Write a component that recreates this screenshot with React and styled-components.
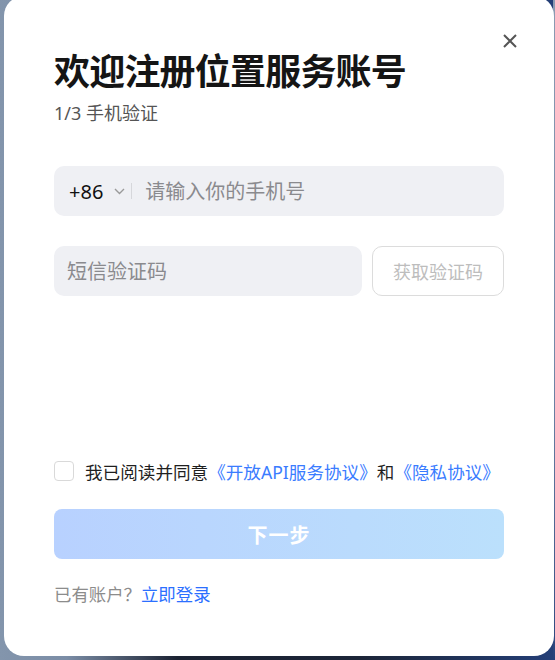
import React, { useState } from 'react';
import styled, { createGlobalStyle } from 'styled-components';

const GlobalStyle = createGlobalStyle`
    html, body {
        margin: 0;
        padding: 0;
    }
    body {
        font-family: "Noto Sans", "Noto Sans CJK SC", sans-serif;
        overflow: hidden;
    }
`;

const Backdrop = styled.div`
    width: 555px;
    height: 660px;
    padding: 0 1px 4px 4px;
    box-sizing: border-box;
    background:
        linear-gradient(to bottom, #8b9bb2 0%, #7388a8 55%, #3d5588 92%, #24407a 100%) right top / 2px 100% no-repeat,
        linear-gradient(to right, #8395ac 0%, #7b8da6 12%, #1b2232 32%, #1c2538 65%, #243f78 100%);
    overflow: hidden;
`;

const Modal = styled.div`
    position: relative;
    width: 550px;
    height: 660px;
    margin-top: -4px;
    box-sizing: border-box;
    padding: 54px 50px 0;
    background: #fff;
    border-radius: 20px;
`;

const CloseButton = styled.button`
    position: absolute;
    top: 35px;
    right: 34px;
    width: 20px;
    height: 20px;
    padding: 0;
    border: 0;
    background: transparent;
    display: flex;
    align-items: center;
    justify-content: center;
    cursor: pointer;
`;

const Title = styled.h1`
    margin: 0;
    font-size: 36px;
    line-height: 43px;
    font-weight: 700;
    color: #151515;
    letter-spacing: -0.8px;
`;

const SubTitle = styled.div`
    margin-top: 8px;
    font-size: 18px;
    line-height: 24px;
    color: #555;
`;

const Field = styled.div`
    display: flex;
    align-items: center;
    height: 50px;
    margin-top: ${props => props.top}px;
    background: #eff0f4;
    border-radius: 10px;
    box-sizing: border-box;
    padding-left: ${props => props.pad}px;
    flex: ${props => props.grow ? 1 : 'none'};
`;

const AreaCode = styled.div`
    display: flex;
    align-items: center;
    font-size: 20px;
    color: #111;
    gap: 11px;
`;

const Divider = styled.span`
    width: 1px;
    height: 16px;
    background: #d6d7db;
    margin: 0 13px 0 6px;
`;

const TextInput = styled.input`
    flex: 1;
    min-width: 0;
    height: 100%;
    border: 0;
    outline: 0;
    padding: 0;
    background: transparent;
    font-family: inherit;
    font-size: 20px;
    color: #222;
    &::placeholder {
        color: #8a8a8e;
    }
`;

const CodeRow = styled.div`
    display: flex;
    gap: 10px;
    margin-top: 30px;
`;

const CodeButton = styled.button`
    width: 132px;
    height: 50px;
    border: 1px solid #dcdcdc;
    border-radius: 10px;
    background: #fff;
    font-family: inherit;
    font-size: 18px;
    color: #bdbdbd;
    padding: 0;
`;

const Agreement = styled.label`
    display: flex;
    align-items: center;
    margin-top: 163px;
    height: 24px;
    font-size: 17.6px;
    color: #1f1f1f;
    white-space: nowrap;
`;

const CheckBox = styled.span`
    width: 20px;
    height: 20px;
    box-sizing: border-box;
    border: 1px solid #d9d9d9;
    border-radius: 4px;
    margin-right: 11px;
    background: #fff;
`;

const Link = styled.a`
    color: ${props => props.muted ? '#3a7cff' : '#2b6fff'};
    text-decoration: none;
    cursor: pointer;
`;

const NextButton = styled.button`
    display: block;
    width: 100%;
    height: 50px;
    margin-top: 26px;
    border: 0;
    border-radius: 8px;
    background: linear-gradient(to right, #b8d1ff, #bbe0fc);
    color: #fff;
    font-family: inherit;
    font-size: 20px;
    font-weight: 700;
    letter-spacing: 1px;
`;

const Footer = styled.div`
    margin-top: 23px;
    font-size: 17.4px;
    line-height: 24px;
    color: #8c8c8c;
`;

function Chevron() {
    return (
        <svg width="11" height="7" viewBox="0 0 11 7">
            <path d="M1 1l4.5 4.5L10 1" fill="none" stroke="#9a9a9a" strokeWidth="1.4" />
        </svg>
    );
}

function CloseIcon() {
    return (
        <svg width="14" height="14" viewBox="0 0 14 14">
            <path d="M1 1l12 12M13 1L1 13" stroke="#555" strokeWidth="2" />
        </svg>
    );
}

export default function App() {
    const [phone, setPhone] = useState('');
    const [code, setCode] = useState('');

    return (
        <Backdrop>
            <GlobalStyle />
            <Modal>
                <CloseButton aria-label="关闭"><CloseIcon /></CloseButton>
                <Title>欢迎注册位置服务账号</Title>
                <SubTitle>1/3 手机验证</SubTitle>

                <Field top={41} pad={15}>
                    <AreaCode>+86 <Chevron /></AreaCode>
                    <Divider />
                    <TextInput placeholder="请输入你的手机号" value={phone}
                        onChange={e => setPhone(e.target.value)} />
                </Field>

                <CodeRow>
                    <Field top={0} pad={13} grow>
                        <TextInput placeholder="短信验证码" value={code}
                            onChange={e => setCode(e.target.value)} />
                    </Field>
                    <CodeButton>获取验证码</CodeButton>
                </CodeRow>

                <Agreement>
                    <CheckBox />
                    我已阅读并同意<Link muted>《开放API服务协议》</Link>和<Link muted>《隐私协议》</Link>
                </Agreement>

                <NextButton>下一步</NextButton>

                <Footer>
                    已有账户？<Link>立即登录</Link>
                </Footer>
            </Modal>
        </Backdrop>
    );
}
